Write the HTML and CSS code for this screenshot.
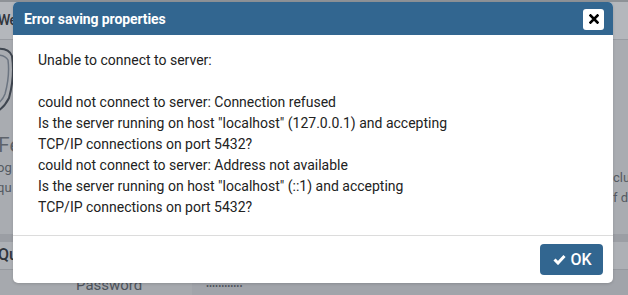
FILE: index.html
```html
<!DOCTYPE html>
<html>
<head>
<meta charset="utf-8">
<link rel="stylesheet" href="styles.css">
</head>
<body>
<div class="page">
  <div class="topstrip"></div>
  <div class="panel-head"><span class="clip">We</span></div>
  <div class="panel-body">
    <div class="left-col">
      <svg class="shield" width="13" height="70" viewBox="0 0 13 70"><path d="M-10 4 Q8 0 12 10 Q15 30 9 52 Q4 62 -4 66" fill="none" stroke="#3f4650" stroke-width="2"/><path d="M-10 10 Q4 7 8 14 Q10 30 5 48 Q2 56 -6 60" fill="none" stroke="#6b7480" stroke-width="1.5"/></svg>
      <div class="feat">Fe</div>
      <div class="small">og</div>
      <div class="small">qu</div>
    </div>
    <div class="right-col">
      <div class="small">clu</div>
      <div class="small">f de</div>
    </div>
  </div>
  <div class="band"></div>
  <div class="panel-head2"><span class="clip">Qu</span></div>
  <div class="row">
    <div class="lbl">Password</div>
    <div class="field">••••••••••••</div>
  </div>
</div>
<div class="dialog">
  <div class="dlg-head">
    <span class="dlg-title">Error saving properties</span>
    <button class="close"><svg width="10" height="10" viewBox="0 0 10 10"><path d="M1.5 1.5 L8.5 8.5 M8.5 1.5 L1.5 8.5" stroke="#000" stroke-width="2.6" stroke-linecap="square"/></svg></button>
  </div>
  <div class="dlg-body">Unable to connect to server:

could not connect to server: Connection refused
Is the server running on host "localhost" (127.0.0.1) and accepting
TCP/IP connections on port 5432?
could not connect to server: Address not available
Is the server running on host "localhost" (::1) and accepting
TCP/IP connections on port 5432?</div>
  <div class="dlg-foot">
    <button class="ok"><svg width="13" height="11" viewBox="0 0 13 11"><path d="M1.5 5.5 L5 9 L11.5 2" fill="none" stroke="#fff" stroke-width="3"/></svg><span>OK</span></button>
  </div>
</div>
</body>
</html>
```
FILE: styles.css
```css
* { box-sizing: border-box; }
html, body { margin: 0; padding: 0; }
body {
  width: 628px;
  height: 295px;
  overflow: hidden;
  position: relative;
  font-family: Roboto, "Liberation Sans", sans-serif;
  background: #a7aaaf;
}
.page { width: 628px; height: 295px; display: flex; flex-direction: column; }
.topstrip { height: 2px; background: #8e9297; flex: none; }
.clip { display: block; width: 13px; overflow: hidden; white-space: nowrap; }
.panel-head {
  height: 38px; flex: none;
  background: #b4b7bc;
  border-bottom: 1px solid #999ca2;
  color: #30353c; font-weight: 500; font-size: 14px;
  line-height: 36px;
}
.panel-head .clip { text-indent: -2px; letter-spacing: -0.5px; }
.panel-body {
  height: 194px; flex: none;
  display: flex; justify-content: space-between;
  background: #a9acb1;
}
.left-col { width: 13px; overflow: hidden; padding-top: 6px; }
.shield { display: block; }
.feat { font-size: 21px; color: #5d636b; margin-top: 16px; white-space: nowrap; text-indent: -2px; line-height: 26px; }
.small { font-size: 13px; color: #545a62; line-height: 20px; white-space: nowrap; }
.left-col .small { text-indent: -3px; }
.right-col { width: 16px; overflow: hidden; padding-top: 128px; padding-left: 1px; }
.band { height: 8px; flex: none; background: #9b9ea4; }
.panel-head2 {
  height: 28px; flex: none;
  background: #adb0b5;
  border-bottom: 1px solid #96999f;
  color: #30353c; font-weight: 500; font-size: 16px; line-height: 26px;
}
.panel-head2 .clip { text-indent: -2px; }
.row { display: flex; flex: 1; background: #a1a4aa; }
.lbl { width: 192px; padding-left: 76px; color: #4d535b; font-size: 15px; padding-top: 6px; background: #a6a9ae; }
.field { flex: 1; color: #4d535b; font-size: 9px; padding-left: 14px; padding-top: 11px; }

.dialog {
  position: absolute;
  left: 13px; top: 2px;
  width: 600px; height: 281px;
  background: #fff;
  border-radius: 5px;
  overflow: hidden;
  display: flex; flex-direction: column;
  box-shadow: 0 1px 3px rgba(0,0,0,0.15);
}
.dlg-head {
  height: 33px; flex: none;
  background: #326690;
  display: flex; align-items: center; justify-content: space-between;
  padding: 0 9px 0 11px;
}
.dlg-title { color: #fff; font-weight: 700; font-size: 14px; letter-spacing: -0.1px; }
.close {
  width: 21px; height: 21px;
  background: #fff; border: none; border-radius: 3px;
  display: flex; align-items: center; justify-content: center;
  padding: 0; margin-top: 1px;
}
.dlg-body {
  flex: 1;
  white-space: pre;
  padding: 15px 0 0 25px;
  font-size: 14px; line-height: 21px;
  color: #222;
}
.dlg-foot {
  height: 48px; flex: none;
  border-top: 1px solid #dcdcdc;
  display: flex; justify-content: flex-end; align-items: flex-start;
  padding: 8px 10px 0 0;
}
.ok {
  width: 63px; height: 31px;
  background: #326690; color: #fff;
  border: none; border-radius: 4px;
  display: flex; align-items: center; justify-content: center; gap: 4px;
  font-family: Roboto, "Liberation Sans", sans-serif;
  font-size: 16px; font-weight: 500;
  padding: 0 0 0 2px;
}
```
